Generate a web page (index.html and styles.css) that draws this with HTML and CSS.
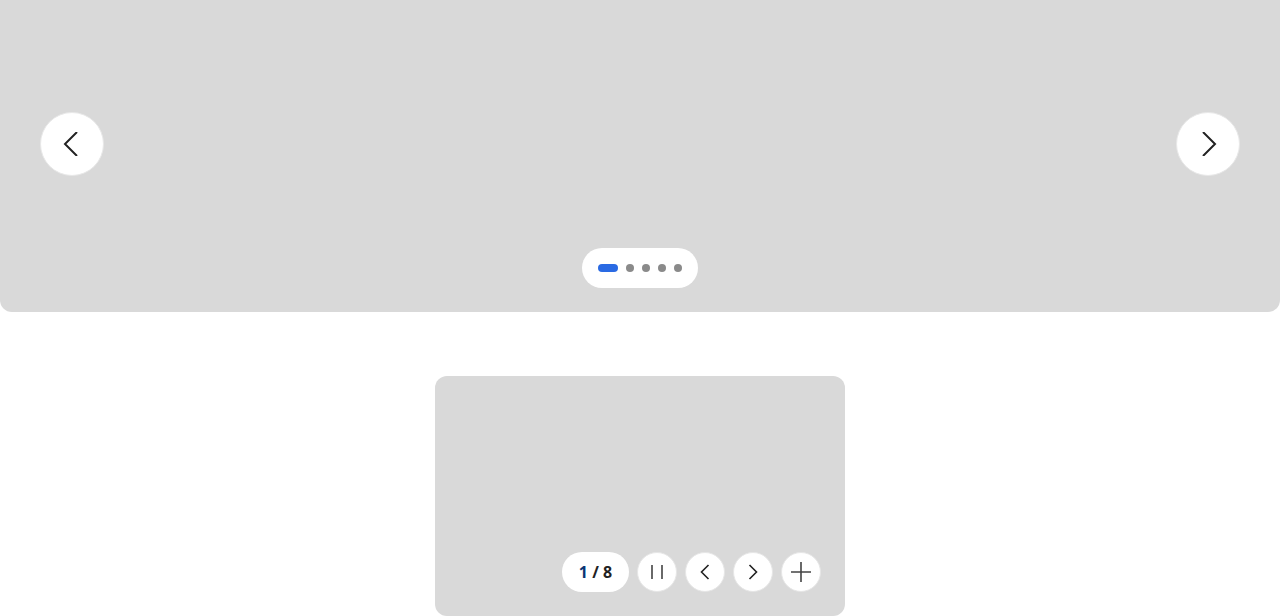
FILE: index.html
```html
<!DOCTYPE html>
<html lang="en">
<head>
<meta charset="utf-8">
<title>Carousels</title>
<link rel="stylesheet" href="styles.css">
</head>
<body>
<section class="hero">
  <button class="nav-btn" aria-label="Previous">
    <svg width="24" height="24" viewBox="0 0 24 24"><path d="M17 0 L5 12 L17 24" fill="none" stroke="#222" stroke-width="2"/></svg>
  </button>
  <div class="dots">
    <span class="dot active"></span>
    <span class="dot"></span>
    <span class="dot"></span>
    <span class="dot"></span>
    <span class="dot"></span>
  </div>
  <button class="nav-btn" aria-label="Next">
    <svg width="24" height="24" viewBox="0 0 24 24"><path d="M7 0 L19 12 L7 24" fill="none" stroke="#222" stroke-width="2"/></svg>
  </button>
</section>

<section class="card">
  <div class="controls">
    <div class="counter"><span class="current">1</span> / 8</div>
    <button class="ctrl" aria-label="Pause">
      <svg width="20" height="20" viewBox="0 0 20 20"><path d="M5 3 V17 M15 3 V17" stroke="#444" stroke-width="1.6"/></svg>
    </button>
    <button class="ctrl" aria-label="Previous">
      <svg width="20" height="20" viewBox="0 0 20 20"><path d="M13.5 3 L6.5 10 L13.5 17" fill="none" stroke="#222" stroke-width="1.6"/></svg>
    </button>
    <button class="ctrl" aria-label="Next">
      <svg width="20" height="20" viewBox="0 0 20 20"><path d="M6.5 3 L13.5 10 L6.5 17" fill="none" stroke="#222" stroke-width="1.6"/></svg>
    </button>
    <button class="ctrl" aria-label="Add">
      <svg width="20" height="20" viewBox="0 0 20 20"><path d="M10 0 V20 M0 10 H20" stroke="#444" stroke-width="1.6"/></svg>
    </button>
  </div>
</section>
</body>
</html>
```

FILE: styles.css
```css
html, body {
  margin: 0;
  padding: 0;
  background: #fff;
  font-family: "Noto Sans", "Open Sans", sans-serif;
  overflow: hidden;
}

button {
  font: inherit;
  padding: 0;
  cursor: pointer;
}

.hero {
  height: 312px;
  background: #d9d9d9;
  border-radius: 0 0 12px 12px;
  display: grid;
  grid-template-columns: 64px 1fr 64px;
  grid-template-rows: 1fr auto;
  padding: 0 40px 24px;
  box-sizing: border-box;
}

.nav-btn {
  width: 64px;
  height: 64px;
  border-radius: 50%;
  background: #fff;
  border: 1px solid #e8e8e8;
  display: flex;
  align-items: center;
  justify-content: center;
  align-self: start;
  margin-top: 112px;
  grid-row: 1 / 3;
}

.nav-btn:first-child { grid-column: 1; }
.nav-btn:last-child { grid-column: 3; }

.dots {
  grid-column: 2;
  grid-row: 2;
  justify-self: center;
  align-self: end;
  height: 40px;
  padding: 0 16px;
  background: #fff;
  border-radius: 20px;
  display: flex;
  align-items: center;
  gap: 8px;
}

.dot {
  width: 8px;
  height: 8px;
  border-radius: 4px;
  background: #8a8a8a;
}

.dot.active {
  width: 20px;
  background: #2a6ae3;
}

.card {
  width: 410px;
  height: 240px;
  margin: 64px auto 0;
  background: #d9d9d9;
  border-radius: 12px;
  display: flex;
  align-items: flex-end;
  justify-content: flex-end;
  padding: 24px;
  box-sizing: border-box;
}

.controls {
  display: flex;
  gap: 8px;
}

.counter {
  height: 40px;
  width: 67px;
  border-radius: 20px;
  background: #fff;
  display: flex;
  align-items: center;
  justify-content: center;
  font-weight: 700;
  font-size: 16px;
  color: #222;
  white-space: pre;
}

.counter .current {
  color: #0b3575;
}

.ctrl {
  width: 40px;
  height: 40px;
  border-radius: 50%;
  background: #fff;
  border: 1px solid #e6e6e6;
  display: flex;
  align-items: center;
  justify-content: center;
}
```
